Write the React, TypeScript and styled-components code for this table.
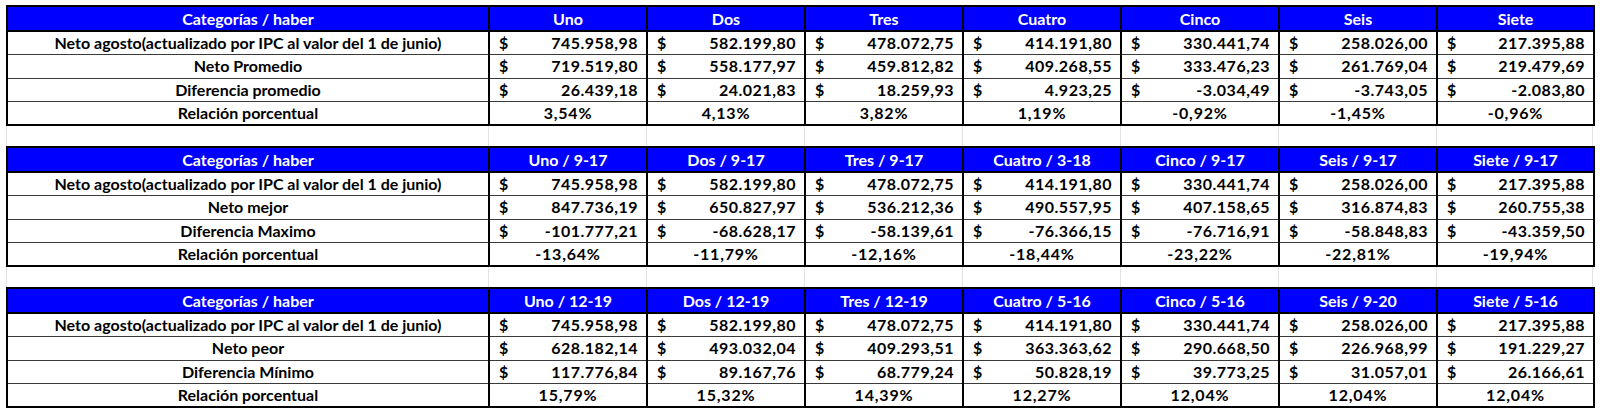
import React from "react";
import styled, { createGlobalStyle } from "styled-components";

const Global = createGlobalStyle`
  html, body { margin: 0; padding: 0; background: #ffffff; }
  body { font-family: Lato, "Open Sans", sans-serif; }
`;

const Sheet = styled.div`
  padding: 5px 0 0 6px;
  display: flex;
  flex-direction: column;
`;

const COLS = [482, 158, 158, 158, 158, 158, 158, 157];

const Table = styled.table`
  border-collapse: collapse;
  table-layout: fixed;
  width: ${COLS.reduce((a, b) => a + b, 0)}px;
  border: 2px solid #000;
  font-weight: 700;
  font-size: 16px;
  color: #000;
`;

const HeadRow = styled.tr`
  height: 25px;
`;

const DataRow = styled.tr`
  height: 23.5px;
`;

const HeadCell = styled.th`
  background: #0000ff;
  color: #ffffff;
  font-weight: 700;
  text-align: center;
  padding: 0;
  border: 2px solid #000;
  line-height: 20px;
`;

const LabelCell = styled.td`
  text-align: center;
  padding: 0;
  border-left: 2px solid #000;
  border-right: 2px solid #000;
  border-top: 1px solid #3a3a3a;
  border-bottom: 1px solid #3a3a3a;
  line-height: 20px;
  white-space: nowrap;
`;

const MoneyCell = styled(LabelCell)`
  text-align: left;
  padding: 0 8px 0 9px;
  letter-spacing: 0.5px;
`;

const Money = styled.div`
  display: flex;
  justify-content: space-between;
`;

const PctCell = styled(LabelCell)`
  letter-spacing: 0.8px;
`;

const Gap = styled.div`
  height: 20px;
  display: grid;
  grid-template-columns: ${COLS.map((c) => c + "px").join(" ")};
`;

const GapCell = styled.div`
  border-left: 1px solid #e2e2e2;
  &:last-child { border-right: 1px solid #e2e2e2; }
`;

type Block = {
  heads: string[];
  rows: { label: string; values: string[] }[];
  pct: string[];
};

const blocks: Block[] = [
  {
    heads: ["Uno", "Dos", "Tres", "Cuatro", "Cinco", "Seis", "Siete"],
    rows: [
      {
        label: "Neto agosto(actualizado por IPC al valor del 1 de junio)",
        values: ["745.958,98", "582.199,80", "478.072,75", "414.191,80", "330.441,74", "258.026,00", "217.395,88"],
      },
      {
        label: "Neto Promedio",
        values: ["719.519,80", "558.177,97", "459.812,82", "409.268,55", "333.476,23", "261.769,04", "219.479,69"],
      },
      {
        label: "Diferencia promedio",
        values: ["26.439,18", "24.021,83", "18.259,93", "4.923,25", "-3.034,49", "-3.743,05", "-2.083,80"],
      },
    ],
    pct: ["3,54%", "4,13%", "3,82%", "1,19%", "-0,92%", "-1,45%", "-0,96%"],
  },
  {
    heads: ["Uno / 9-17", "Dos / 9-17", "Tres / 9-17", "Cuatro / 3-18", "Cinco / 9-17", "Seis / 9-17", "Siete / 9-17"],
    rows: [
      {
        label: "Neto agosto(actualizado por IPC al valor del 1 de junio)",
        values: ["745.958,98", "582.199,80", "478.072,75", "414.191,80", "330.441,74", "258.026,00", "217.395,88"],
      },
      {
        label: "Neto mejor",
        values: ["847.736,19", "650.827,97", "536.212,36", "490.557,95", "407.158,65", "316.874,83", "260.755,38"],
      },
      {
        label: "Diferencia Maximo",
        values: ["-101.777,21", "-68.628,17", "-58.139,61", "-76.366,15", "-76.716,91", "-58.848,83", "-43.359,50"],
      },
    ],
    pct: ["-13,64%", "-11,79%", "-12,16%", "-18,44%", "-23,22%", "-22,81%", "-19,94%"],
  },
  {
    heads: ["Uno / 12-19", "Dos / 12-19", "Tres / 12-19", "Cuatro / 5-16", "Cinco / 5-16", "Seis / 9-20", "Siete / 5-16"],
    rows: [
      {
        label: "Neto agosto(actualizado por IPC al valor del 1 de junio)",
        values: ["745.958,98", "582.199,80", "478.072,75", "414.191,80", "330.441,74", "258.026,00", "217.395,88"],
      },
      {
        label: "Neto peor",
        values: ["628.182,14", "493.032,04", "409.293,51", "363.363,62", "290.668,50", "226.968,99", "191.229,27"],
      },
      {
        label: "Diferencia Mínimo",
        values: ["117.776,84", "89.167,76", "68.779,24", "50.828,19", "39.773,25", "31.057,01", "26.166,61"],
      },
    ],
    pct: ["15,79%", "15,32%", "14,39%", "12,27%", "12,04%", "12,04%", "12,04%"],
  },
];

function DataTable({ block }: { block: Block }) {
  return (
    <Table>
      <colgroup>
        {COLS.map((w, i) => (
          <col key={i} style={{ width: w }} />
        ))}
      </colgroup>
      <tbody>
        <HeadRow>
          <HeadCell>Categorías / haber</HeadCell>
          {block.heads.map((h) => (
            <HeadCell key={h}>{h}</HeadCell>
          ))}
        </HeadRow>
        {block.rows.map((r) => (
          <DataRow key={r.label}>
            <LabelCell>{r.label}</LabelCell>
            {r.values.map((v, i) => (
              <MoneyCell key={i}>
                <Money>
                  <span>$</span>
                  <span>{v}</span>
                </Money>
              </MoneyCell>
            ))}
          </DataRow>
        ))}
        <DataRow>
          <LabelCell>Relación porcentual</LabelCell>
          {block.pct.map((p, i) => (
            <PctCell key={i}>{p}</PctCell>
          ))}
        </DataRow>
      </tbody>
    </Table>
  );
}

export default function App() {
  return (
    <>
      <Global />
      <Sheet>
        {blocks.map((b, i) => (
          <React.Fragment key={i}>
            {i > 0 && (
              <Gap>
                {COLS.map((_, j) => (
                  <GapCell key={j} />
                ))}
              </Gap>
            )}
            <DataTable block={b} />
          </React.Fragment>
        ))}
      </Sheet>
    </>
  );
}
